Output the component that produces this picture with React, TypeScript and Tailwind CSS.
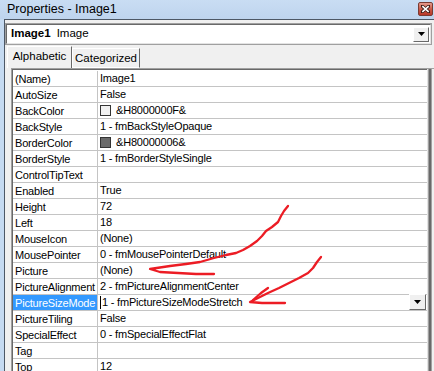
import React from "react";

type Prop = {
	name: string;
	value: string;
	swatch?: string;
	selected?: boolean;
};

const props: Prop[] = [
	{ name: "(Name)", value: "Image1" },
	{ name: "AutoSize", value: "False" },
	{ name: "BackColor", value: "&H8000000F&", swatch: "#f0f0f0" },
	{ name: "BackStyle", value: "1 - fmBackStyleOpaque" },
	{ name: "BorderColor", value: "&H80000006&", swatch: "#696969" },
	{ name: "BorderStyle", value: "1 - fmBorderStyleSingle" },
	{ name: "ControlTipText", value: "" },
	{ name: "Enabled", value: "True" },
	{ name: "Height", value: "72" },
	{ name: "Left", value: "18" },
	{ name: "MouseIcon", value: "(None)" },
	{ name: "MousePointer", value: "0 - fmMousePointerDefault" },
	{ name: "Picture", value: "(None)" },
	{ name: "PictureAlignment", value: "2 - fmPictureAlignmentCenter" },
	{ name: "PictureSizeMode", value: "1 - fmPictureSizeModeStretch", selected: true },
	{ name: "PictureTiling", value: "False" },
	{ name: "SpecialEffect", value: "0 - fmSpecialEffectFlat" },
	{ name: "Tag", value: "" },
	{ name: "Top", value: "12" },
];

function DropButton({ className }: { className: string }) {
	return (
		<div
			className={`flex items-center justify-center bg-[#f0f0f0] border border-t-white border-l-white border-r-[#696969] border-b-[#696969] ${className}`}
		>
			<svg width="7" height="4" viewBox="0 0 7 4">
				<path d="M0 0h7L3.5 4z" fill="#000" />
			</svg>
		</div>
	);
}

function PropRow({ p }: { p: Prop }) {
	return (
		<div className="flex h-[16px] border-b border-[#c4c4c4]">
			<div
				className={`w-[84px] shrink-0 pl-[2px] pt-px leading-[15px] whitespace-nowrap overflow-hidden ${
					p.selected ? "bg-[#3399ff] text-white" : "text-black"
				}`}
			>
				{p.name}
			</div>
			<div className="w-px shrink-0 bg-[#c4c4c4]" />
			<div className="flex flex-1 items-center min-w-0 pl-[2px] leading-[15px] whitespace-nowrap text-black">
				{p.swatch && (
					<span
						className="mr-[5px] inline-block h-[11px] w-[11px] shrink-0 border border-[#333]"
						style={{ backgroundColor: p.swatch }}
					/>
				)}
				{p.selected && <span className="mr-px h-[13px] w-px bg-black" />}
				<span className="flex-1 pt-px">{p.value}</span>
				{p.selected && <DropButton className="h-[16px] w-[17px] mr-px -mt-px" />}
			</div>
		</div>
	);
}

function Annotations() {
	return (
		<svg
			className="absolute left-0 top-0 pointer-events-none"
			width="434"
			height="371"
			viewBox="0 0 434 371"
			fill="none"
			stroke="#ec1c24"
			strokeWidth="2.3"
			strokeLinecap="round"
			strokeLinejoin="round"
		>
			<path d="M288 206 L284 211 L281 216 L278 222 L272 227 L266 231 L262 236 L257 241 L250 246 L243 250 L236 253 L226 255 L214 258 L200 262 L186 264 L170 266 L150 269 L160 272 L178 273 L196 274 L214 274" />
			<path d="M321 257 L317 262 L313 268 L308 273 L299 278 L289 283 L279 288 L268 293 L258 298 L250 302 L262 303 L274 303 L285 303" />
			<path d="M268 288 L261 293 L253 300" />
		</svg>
	);
}

export default function App() {
	return (
		<div className="relative w-[434px] h-[371px] overflow-hidden bg-[#c5daf1] font-['Liberation_Sans',Arial,sans-serif]">
			{/* title bar */}
			<div className="relative flex h-[19px] items-center pl-[7px] bg-gradient-to-b from-[#c9ddf3] to-[#bed4ee]">
				<span className="text-[12.5px] text-black leading-none">Properties - Image1</span>
				<div className="absolute right-[1px] top-[2px] flex h-[14px] w-[15px] items-center justify-center rounded-[2px] border border-[#7a3b33] bg-gradient-to-b from-[#e39a8d] via-[#cc5a48] to-[#b8372a]">
					<svg width="9" height="8" viewBox="0 0 9 8">
						<path d="M1 1L8 7M8 1L1 7" stroke="#3a1a16" strokeWidth="3.2" strokeLinecap="square" />
						<path d="M1.3 1.2L7.7 6.8M7.7 1.2L1.3 6.8" stroke="#fff" strokeWidth="1.6" />
					</svg>
				</div>
			</div>

			{/* client */}
			<div className="ml-[4px] h-[352px] border-l border-t border-[#4d5866] bg-[#f0f0f0] flex flex-col">
				{/* object combo */}
				<div className="mt-[4px] ml-[1px] mr-[3px] flex h-[20px] items-center bg-white border border-t-[#696969] border-l-[#696969] border-r-[#e3e3e3] border-b-[#e3e3e3] outline outline-1 outline-offset-0 outline-[#a0a0a0]">
					<span className="pl-[4px] text-[11.5px] font-bold leading-none text-black">Image1</span>
					<span className="pl-[6px] text-[11.5px] leading-none text-black flex-1">Image</span>
					<DropButton className="mr-[1px] h-[15px] w-[16px]" />
				</div>

				{/* tabs */}
				<div className="mt-[2px] ml-[2px] flex h-[22px] items-start">
					<div className="flex h-[22px] w-[65px] items-center justify-center border-l border-t border-r border-l-white border-t-white border-r-[#696969] bg-[#f0f0f0] text-[11.5px] text-black">
						<span className="-mt-[1px]">Alphabetic</span>
					</div>
					<div className="mt-[2px] flex h-[20px] w-[68px] items-center justify-center border-l border-t border-r border-b border-l-white border-t-white border-r-[#696969] border-b-white bg-[#f0f0f0] text-[11.5px] text-black">
						<span className="mt-[1px]">Categorized</span>
					</div>
				</div>

				{/* property grid */}
				<div className="ml-[6px] flex flex-1 min-h-0 border-l border-t border-[#a0a0a0]">
					<div className="flex flex-1 min-w-0 flex-col border-l border-t border-[#696969] bg-white">
						<div className="h-px" />
						<div className="text-[11px] tracking-[-0.2px] overflow-hidden">
							{props.map((p) => (
								<PropRow key={p.name} p={p} />
							))}
						</div>
					</div>
					<div className="w-px bg-[#e3e3e3]" />
					<div className="w-px bg-[#a0a0a0]" />
					<div className="w-[2px] bg-[#696969]" />
					<div className="w-px bg-[#a0a0a0]" />
					<div className="w-[2px] bg-[#f0f0f0]" />
				</div>
			</div>

			<Annotations />
		</div>
	);
}
